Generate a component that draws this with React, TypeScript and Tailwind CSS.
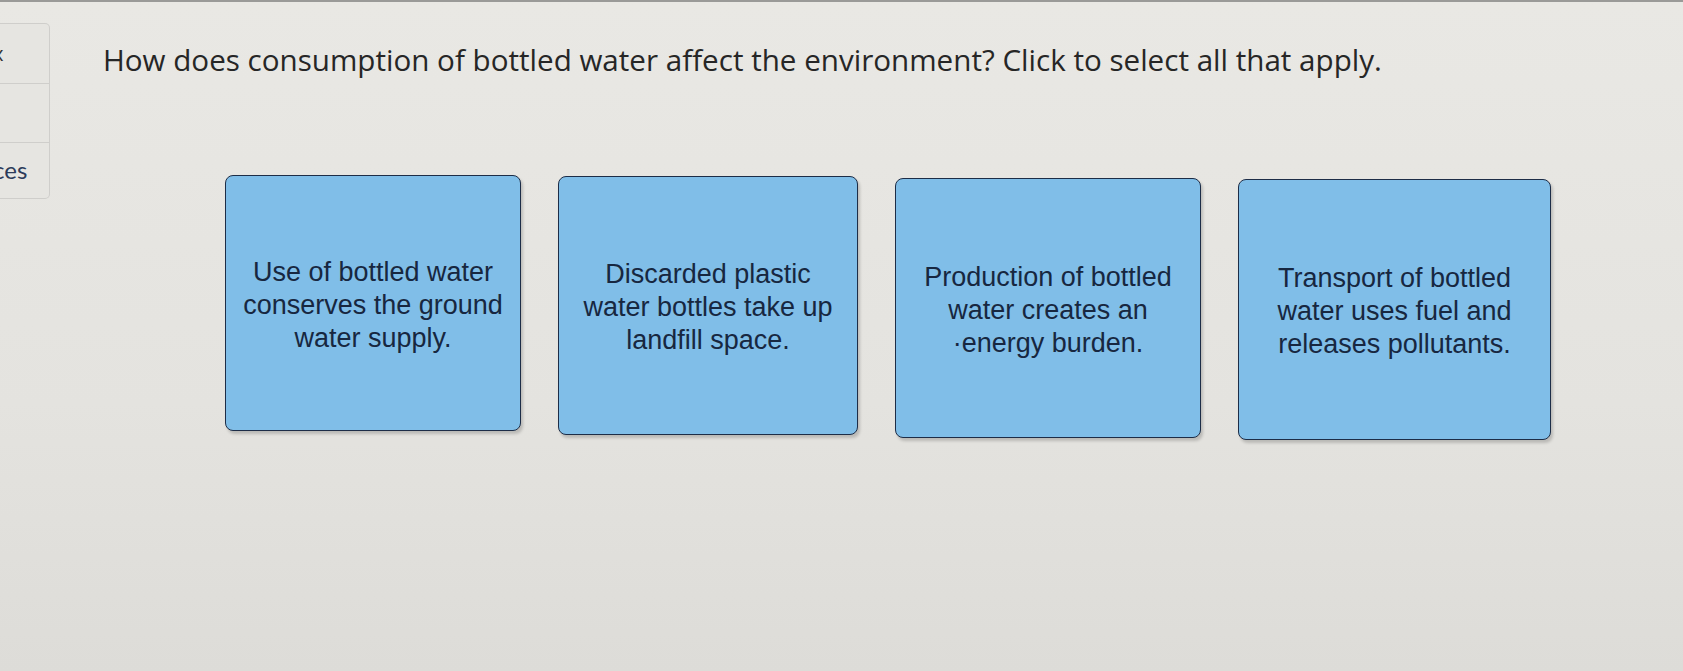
import React from "react";

const choices = [
    {
        lines: ["Use of bottled water", "conserves the ground", "water supply."],
        box: "w-[296px] h-[256px] mt-0",
    },
    {
        lines: ["Discarded plastic", "water bottles take up", "landfill space."],
        box: "w-[300px] h-[259px] mt-[1px]",
    },
    {
        lines: ["Production of bottled", "water creates an", "·energy burden."],
        box: "w-[306px] h-[260px] mt-[3px]",
    },
    {
        lines: ["Transport of bottled", "water uses fuel and", "releases pollutants."],
        box: "w-[313px] h-[261px] mt-[4px]",
    },
];

const ChoiceCard: React.FC<{ text: string[]; box: string }> = ({ text, box }) => {
    return (
        <button
            aria-label={text.join(" ")}
            className={`flex shrink-0 items-center justify-center rounded-[8px] border-[1.5px] border-[#1d2d47] bg-[#80bee8] pt-[4px] shadow-[2px_3px_3px_rgba(0,0,0,0.18)] ${box}`}
        >
            <span className="text-center text-[27px] leading-[33px] text-[#172740] [font-family:'Liberation_Sans',Arial,sans-serif]">
                {text.map((t, i) => (
                    <span key={i} className="block whitespace-nowrap">
                        {t}
                    </span>
                ))}
            </span>
        </button>
    );
};

export default function App() {
    return (
        <div className="relative h-[671px] w-[1683px] overflow-hidden border-t-2 border-[#9a9a98] bg-[linear-gradient(180deg,#e9e8e4_0%,#e4e3df_60%,#dddcd8_100%)] [font-family:'Open_Sans',Lato,sans-serif]">
            <div className="flex">
                {/* side panel, clipped at the left edge */}
                <div className="mt-[21px] flex h-[176px] w-[50px] shrink-0 flex-col overflow-hidden rounded-r-[5px] border border-l-0 border-[#cfcecb] bg-[#e6e5e1]">
                    <div className="flex h-[60px] items-center border-b border-[#cfcecb] text-[20px] text-[#333]">
                        <span className="-ml-[7px]">x</span>
                    </div>
                    <div className="h-[59px] border-b border-[#cfcecb]" />
                    <div className="flex flex-1 items-start pt-[12px] text-[24px] leading-[30px] text-[#2c3b5a] [font-family:Lato,sans-serif]">
                        <span className="-ml-[7px]">ces</span>
                    </div>
                </div>

                <div className="flex-1">
                    <h1 className="ml-[53px] mt-[38px] whitespace-nowrap text-[29.6px] leading-[40px] text-[#262626]">
                        How does consumption of bottled water affect the environment? Click to select all that apply.
                    </h1>

                    <div className="ml-[175px] mt-[95px] flex items-start gap-[37px]">
                        {choices.map((c, i) => (
                            <ChoiceCard key={i} text={c.lines} box={c.box} />
                        ))}
                    </div>
                </div>
            </div>
        </div>
    );
}
